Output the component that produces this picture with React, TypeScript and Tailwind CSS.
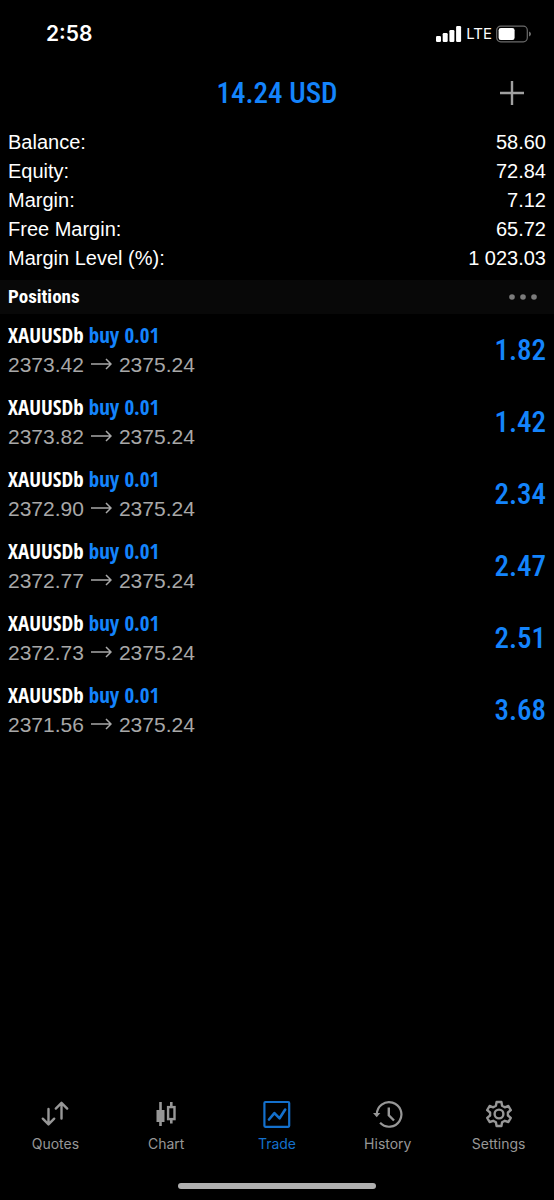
import type { ReactNode } from "react";

const summary = [
  { label: "Balance:", value: "58.60" },
  { label: "Equity:", value: "72.84" },
  { label: "Margin:", value: "7.12" },
  { label: "Free Margin:", value: "65.72" },
  { label: "Margin Level (%):", value: "1 023.03" },
];

const positions = [
  { id: 1, open: "2373.42", current: "2375.24", profit: "1.82" },
  { id: 2, open: "2373.82", current: "2375.24", profit: "1.42" },
  { id: 3, open: "2372.90", current: "2375.24", profit: "2.34" },
  { id: 4, open: "2372.77", current: "2375.24", profit: "2.47" },
  { id: 5, open: "2372.73", current: "2375.24", profit: "2.51" },
  { id: 6, open: "2371.56", current: "2375.24", profit: "3.68" },
];

const QuotesIcon = () => (
  <svg width="28" height="28" viewBox="0 0 28 28" fill="none" stroke="currentColor" strokeWidth="2.4" strokeLinecap="round" strokeLinejoin="round">
    <path d="M7.5 9v15M1.8 18.7l5.7 5.7 5.7-5.7" />
    <path d="M20.5 18.6V3M14.8 8.6l5.7-5.8 5.7 5.8" />
  </svg>
);

const ChartIcon = () => (
  <svg width="28" height="28" viewBox="0 0 28 28" fill="none" stroke="currentColor">
    <rect x="4.5" y="10" width="8" height="12" fill="currentColor" stroke="none" />
    <path d="M8.5 2v24" strokeWidth="2.6" />
    <rect x="16.1" y="7.1" width="6.4" height="12" strokeWidth="2.4" />
    <path d="M19.3 2v5M19.3 19v4.5" strokeWidth="2.6" />
  </svg>
);

const TradeIcon = () => (
  <svg width="28" height="28" viewBox="0 0 28 28" fill="none" stroke="currentColor" strokeLinecap="round" strokeLinejoin="round">
    <rect x="1.4" y="2" width="24.8" height="24.8" rx="1" strokeWidth="2.2" />
    <path d="M6 19.5l5.4-6.4 5.2 5.2L22.2 9.500" strokeWidth="2.6" />
  </svg>
);

const HistoryIcon = () => (
  <svg width="30" height="28" viewBox="0 0 30 28" fill="none" stroke="currentColor" strokeWidth="2.2">
    <path d="M3.8 14.4A12.3 12.3 0 1 1 7.1 22.8" />
    <path d="M0 13h7.4l-3.7 4.2z" fill="currentColor" stroke="none" />
    <path d="M15.8 7.5v7.8l5.2 5.2" strokeWidth="2.4" />
  </svg>
);

const SettingsIcon = () => (
  <svg width="28" height="28" viewBox="0 0 28 28" fill="none" stroke="currentColor" strokeWidth="2.4" strokeLinejoin="round">
    <path d="M11.6 2h4.8l.7 3.7 2.7 1.6 3.6-1.3 2.4 4.1-2.9 2.4v3l2.9 2.4-2.4 4.1-3.6-1.2-2.7 1.5-.7 3.7h-4.8l-.7-3.7-2.7-1.5L4.6 22l-2.4-4.1 2.9-2.4v-3l-2.9-2.4L4.6 6l3.6 1.3 2.7-1.6z" />
    <circle cx="14" cy="14" r="4.4" />
  </svg>
);

const tabs: { name: string; icon: ReactNode; active?: boolean }[] = [
  { name: "Quotes", icon: <QuotesIcon /> },
  { name: "Chart", icon: <ChartIcon /> },
  { name: "Trade", icon: <TradeIcon />, active: true },
  { name: "History", icon: <HistoryIcon /> },
  { name: "Settings", icon: <SettingsIcon /> },
];

const StatusBar = () => (
  <div className="flex h-16 items-center justify-between pl-[46px] pr-[22px] pt-1 font-[Inter,sans-serif] text-white">
    <span className="text-[21px] font-semibold">2:58</span>
    <div className="flex items-center gap-1">
      <svg width="26" height="16" viewBox="0 0 26 16" fill="currentColor">
        <rect x="0" y="10" width="5" height="6" rx="1.2" />
        <rect x="6.7" y="7" width="5" height="9" rx="1.2" />
        <rect x="13.4" y="4" width="5" height="12" rx="1.2" />
        <rect x="20.1" y="0" width="5" height="16" rx="1.2" />
      </svg>
      <span className="text-[15px]">LTE</span>
      <svg width="36" height="18" viewBox="0 0 36 18" fill="none">
        <rect x=".7" y="1.2" width="30.6" height="15.6" rx="4" stroke="#6b6b6b" strokeWidth="1.2" />
        <rect x="2.6" y="3" width="16" height="12" rx="2.2" fill="#fff" />
        <path d="M33 6.5v5c1.2-.4 2-1.3 2-2.5s-.8-2.1-2-2.5z" fill="#6b6b6b" />
      </svg>
    </div>
  </div>
);

const App = () => {
  return (
    <div className="flex min-h-screen flex-col bg-black font-['Liberation_Sans',Arial,sans-serif]">
      <StatusBar />

      <header className="grid h-16 grid-cols-[1fr_auto_1fr] items-start px-4 pt-2">
        <h1 className="col-start-2 font-['Roboto_Condensed',sans-serif] text-[29px] leading-[42px] font-medium text-[#1484fc]">
          14.24 USD
        </h1>
        <button type="button" aria-label="New order" className="mr-3 mt-[7px] justify-self-end text-[#a0a0a0]">
          <svg width="28" height="28" viewBox="0 0 28 28" stroke="currentColor" strokeWidth="2.4">
            <path d="M14 2v24M2 14h24" />
          </svg>
        </button>
      </header>

      <dl className="px-2 pb-[7px] text-xl leading-[29px] text-white">
        {summary.map(({ label, value }) => (
          <div key={label} className="flex justify-between">
            <dt>{label}</dt>
            <dd>{value}</dd>
          </div>
        ))}
      </dl>

      <div className="flex h-[34px] items-center justify-between bg-[#080808] pl-2 pr-4">
        <h2 className="font-['Roboto_Condensed',sans-serif] text-[19px] font-bold text-white">Positions</h2>
        <button type="button" aria-label="Position options" className="text-[#7c7c7c]">
          <svg width="30" height="8" viewBox="0 0 30 8" fill="currentColor">
            <circle cx="4" cy="4" r="2.8" />
            <circle cx="15" cy="4" r="2.8" />
            <circle cx="26" cy="4" r="2.8" />
          </svg>
        </button>
      </div>

      <ul>
        {positions.map((p) => (
          <li key={p.id} className="flex h-[72px] items-center justify-between px-2">
            <div className="flex flex-col gap-[2px]">
              <div className="font-['Open_Sans_Condensed','Roboto_Condensed',sans-serif] text-[21px] leading-[26px] font-semibold text-white">
                XAUUSDb <span className="text-[#1484fc]">buy 0.01</span>
              </div>
              <div className="flex items-center gap-[7px] text-[21px] leading-[29px] text-[#a8a8a8]">
                <span>{p.open}</span>
                <svg width="21" height="12" viewBox="0 0 21 12" fill="none" stroke="currentColor" strokeWidth="1.5">
                  <path d="M0 6h20M15 1l5 5-5 5" />
                </svg>
                <span>{p.current}</span>
              </div>
            </div>
            <span className="font-['Roboto_Condensed',sans-serif] text-[29px] leading-[42px] font-medium text-[#1484fc]">{p.profit}</span>
          </li>
        ))}
      </ul>

      <nav className="mt-auto grid grid-cols-5 font-[Inter,sans-serif] text-[14px] leading-4">
        {tabs.map(({ name, icon, active }) => (
          <a
            key={name}
            href={`#${name.toLowerCase()}`}
            aria-current={active ? "page" : undefined}
            className={`flex flex-col items-center gap-2 ${active ? "text-[#1470cc]" : "text-[#979797]"}`}
          >
            {icon}
            <span>{name}</span>
          </a>
        ))}
      </nav>
      <div className="mx-auto mb-[11px] mt-[31px] h-[6px] w-[198px] rounded-full bg-[#b0b0b0]" />
    </div>
  );
};

export default App;
